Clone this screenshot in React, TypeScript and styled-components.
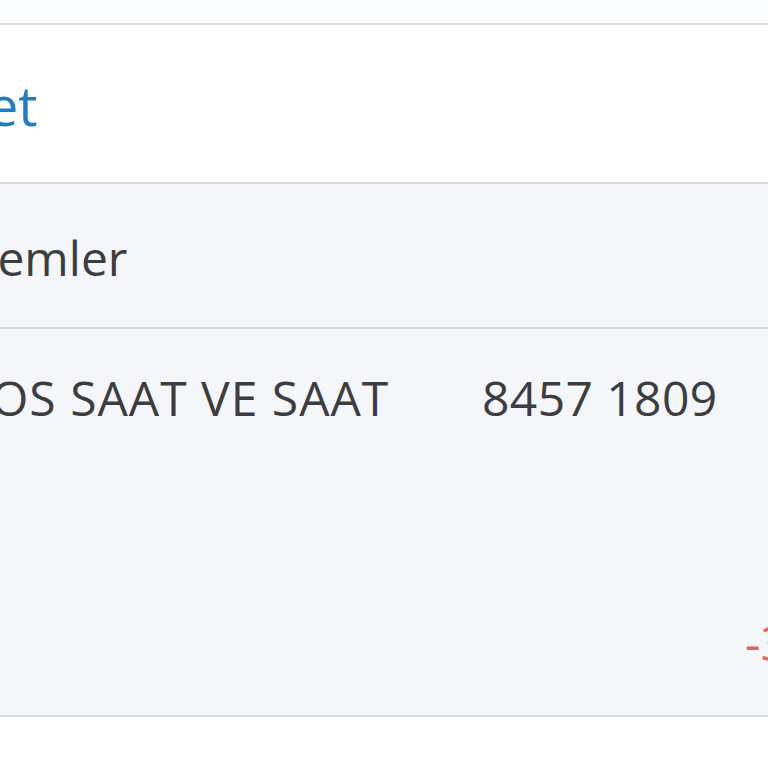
import React from "react";
import styled, { createGlobalStyle } from "styled-components";

const Global = createGlobalStyle`
  html, body {
    margin: 0;
    padding: 0;
    background: #ffffff;
    overflow: hidden;
  }
  body {
    font-family: "Open Sans", "Noto Sans", "DejaVu Sans", sans-serif;
    -webkit-font-smoothing: antialiased;
  }
`;

const Viewport = styled.div`
  width: 768px;
  height: 768px;
  overflow: hidden;
  background: #ffffff;
  display: flex;
  flex-direction: column;
`;

const TopStrip = styled.div`
  height: 23px;
  background: #fbfcfd;
  border-bottom: 2px solid #d9dce1;
  flex: none;
`;

const Header = styled.header`
  height: 159px;
  background: #ffffff;
  border-bottom: 2px solid #d6d9df;
  box-sizing: border-box;
  padding-top: 53px;
  flex: none;
  white-space: nowrap;
`;

const Title = styled.h1<{ $cut: number }>`
  margin: 0 0 0 ${(p) => -p.$cut}px;
  font-size: 54px;
  line-height: 1;
  font-weight: 400;
  color: #1f7dc4;
`;

const SectionHead = styled.div`
  height: 145px;
  background: #f5f6fa;
  border-bottom: 2px solid #d8dbe1;
  box-sizing: border-box;
  padding-top: 50px;
  flex: none;
  white-space: nowrap;
`;

const SectionTitle = styled.h2<{ $cut: number }>`
  margin: 0 0 0 ${(p) => -p.$cut}px;
  font-size: 48px;
  line-height: 1;
  font-weight: 400;
  color: #3c3d40;
`;

const Row = styled.div`
  height: 388px;
  background: #f5f6fa;
  border-bottom: 2px solid #d8dbe1;
  box-sizing: border-box;
  padding-top: 45px;
  display: grid;
  grid-template-columns: 482px 286px;
  grid-template-rows: 48px 1fr;
  row-gap: 197px;
  flex: none;
  white-space: nowrap;
`;

const Cell = styled.div<{ $cut?: number; $tone?: "text" | "neg"; $track?: number }>`
  font-size: 48px;
  line-height: 1;
  font-weight: 400;
  letter-spacing: ${(p) => p.$track ?? 0}px;
  color: ${(p) => (p.$tone === "neg" ? "#ea6450" : "#3c3d40")};
  margin-left: ${(p) => -(p.$cut ?? 0)}px;
`;

const AmountCell = styled(Cell)`
  grid-column: 2;
  grid-row: 2;
  padding-left: 263px;
`;

const Bottom = styled.div`
  flex: 1;
  background: #ffffff;
`;

export default function App() {
  return (
    <>
      <Global />
      <Viewport>
        <TopStrip />
        <Header>
          <Title $cut={105}>Sepet</Title>
        </Header>
        <SectionHead>
          <SectionTitle $cut={51}>İşlemler</SectionTitle>
        </SectionHead>
        <Row>
          <Cell $cut={9} $track={1}>OS SAAT VE SAAT</Cell>
          <Cell $track={0.4}>8457 1809</Cell>
          <AmountCell $tone="neg">-3.499,00 TL</AmountCell>
        </Row>
        <Bottom />
      </Viewport>
    </>
  );
}
